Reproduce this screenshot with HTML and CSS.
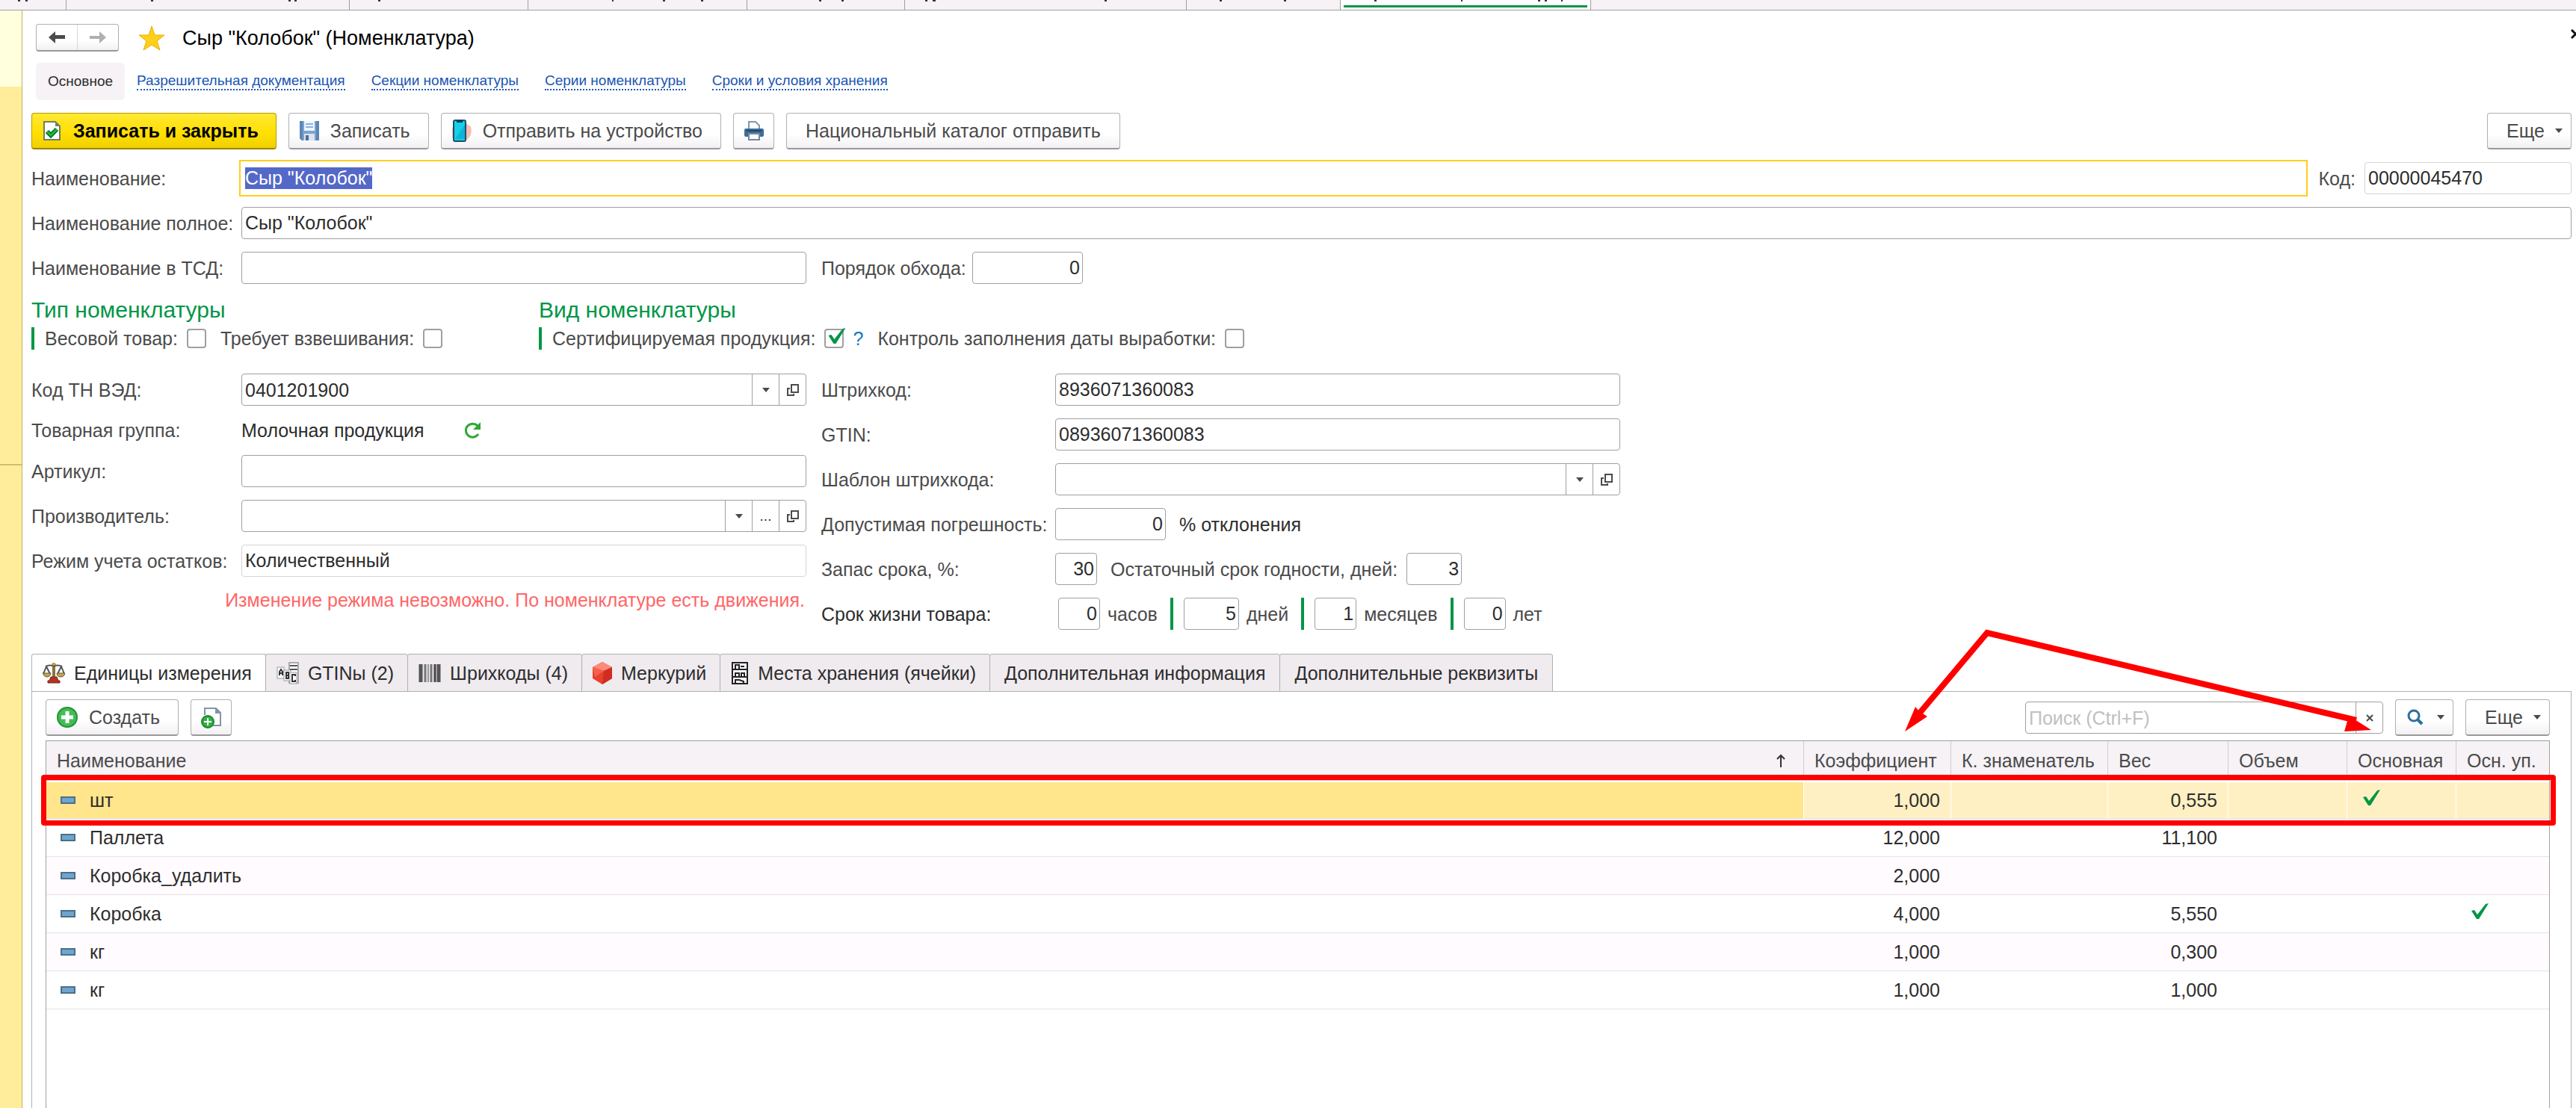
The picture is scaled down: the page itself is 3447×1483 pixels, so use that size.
FILE: index.html
```html
<!DOCTYPE html>
<html lang="ru">
<head>
    <meta charset="UTF-8">
    <meta name="viewport" content="width=device-width, initial-scale=1.0">
    <title>Сыр "Колобок" (Номенклатура)</title>
    <link rel="stylesheet" href="styles.css">
</head>
<body>

    <!-- иконки, которые используются несколько раз -->
    <svg class="sprite" aria-hidden="true">
        <symbol id="i-open" viewBox="0 0 18 18">
            <path d="M7 2h9v10H7zM5 7H2v9h8v-2" fill="none" stroke="#4b4b4b" stroke-width="2"/>
        </symbol>
        <symbol id="i-down" viewBox="0 0 10 6">
            <path d="M0 0h10L5 6z" fill="#4b4b4b"/>
        </symbol>
        <symbol id="i-check" viewBox="0 0 24 22">
            <path d="M1 10l4-1 4 6L20 1l4-1L11 21H8z" fill="#009646"/>
        </symbol>
        <symbol id="i-row" viewBox="0 0 20 10">
            <rect x="1" y="1" width="18" height="8" fill="#6fa5cf" stroke="#4a7088" stroke-width="2"/>
        </symbol>
    </svg>

    <div class="windows">
        <div class="window-tab w1"></div>
        <div class="window-tab w2"></div>
        <div class="window-tab w3"></div>
        <div class="window-tab w4"></div>
        <div class="window-tab w5"></div>
        <div class="window-tab w6"></div>
        <div class="window-tab w7"></div>
        <div class="window-tab w8 current"></div>
        <svg class="tails" width="2130" height="2" aria-hidden="true">
            <path d="M24 1h3M34 1h3M202 1h3M386 1h3M394 1h3M506 1h3M819 1h2M887 1h3M938 1h3M1096 1h3M1126 1h3M1238 1h3M1248 1h4M1478 1h3M1632 1h3M1718 1h3M1839 1h3M1955 1h2M2058 1h3M2067 1h3M2089 1h2" stroke="#333" stroke-width="2"/>
        </svg>
    </div>

    <div class="app">
        <aside class="sidebar">
            <div class="side-top"></div>
            <div class="side-mid"></div>
        </aside>

        <main class="form">
            <header class="title-bar">
                <div class="history">
                    <button type="button" aria-label="Назад">
                        <svg width="22" height="16" viewBox="0 0 22 16"><path d="M0 8l9-8v5h13v5H9v6z" fill="#4b4b4b"/></svg>
                    </button>
                    <button type="button" aria-label="Вперед">
                        <svg width="22" height="16" viewBox="0 0 22 16"><path d="M22 8l-9-8v6H0v4h13v6z" fill="#b0b0b0"/></svg>
                    </button>
                </div>
                <svg class="star" width="36" height="34" viewBox="0 0 36 34"><path d="M18 1l4 12h13l-10 8 4 12-11-7-11 7 4-12-10-8h13z" fill="#ffcf1a" stroke="#e5b000"/></svg>
                <h1>Сыр "Колобок" (Номенклатура)</h1>
                <button type="button" class="close" aria-label="Закрыть">
                    <svg width="13" height="13" viewBox="0 0 13 13"><path d="M1 1l11 11M12 1L1 12" stroke="#111" stroke-width="3"/></svg>
                </button>
            </header>

            <nav class="sections">
                <span class="section-current">Основное</span>
                <a href="#">Разрешительная документация</a>
                <a href="#">Секции номенклатуры</a>
                <a href="#">Серии номенклатуры</a>
                <a href="#">Сроки и условия хранения</a>
            </nav>

            <div class="toolbar">
                <button type="button" class="btn btn-main">
                    <svg width="26" height="28" viewBox="0 0 26 28"><path d="M2 2h15l6 6v18H2z" fill="#fff" stroke="#6f7f60" stroke-width="2"/><path d="M17 2v6h6z" fill="#6f8076"/><path d="M6 15l5 5 8-8" fill="none" stroke="#064" stroke-width="6"/><path d="M6 15l5 5 8-8" fill="none" stroke="#1cbf1c" stroke-width="3"/></svg>
                    Записать и закрыть
                </button>
                <button type="button" class="btn btn-icon">
                    <svg width="26" height="28" viewBox="0 0 26 28"><path d="M0 1h26v26H3l-3-3z" fill="#7ba3d3"/><path d="M0 1h4v26H3l-3-3zM22 1h4v26h-4z" fill="#5f86b4"/><path d="M6 1h14v13H6z" fill="#eef5fd"/><path d="M8 5h10M8 9h10" stroke="#8fb1dc" stroke-width="2"/><path d="M6 18h14v9H6z" fill="#dde3ea"/><path d="M8 20h4v7H8z" fill="#4a6f9d"/></svg>
                    Записать
                </button>
                <button type="button" class="btn btn-icon">
                    <svg width="26" height="30" viewBox="0 0 26 30"><path d="M2 10q-4 9 1 17zM18 6l6 4q3 11-6 17z" fill="#f8bdb2" stroke="#f8bdb2" stroke-width="2"/><rect x="2" y="1" width="16" height="28" rx="2" fill="#18cfe8" stroke="#1d5068" stroke-width="2"/><path d="M6 1h8v3H6z" fill="#173b52"/><path d="M4 26L17 7v19z" fill="#0fb4d8"/></svg>
                    Отправить на устройство
                </button>
                <button type="button" class="btn btn-square" aria-label="Печать">
                    <svg width="28" height="28" viewBox="0 0 28 28"><path d="M7 12V2h9l5 5v5" fill="#fff" stroke="#8298ac" stroke-width="2"/><rect x="1" y="11" width="26" height="11" rx="2" fill="#3f6d98"/><path d="M4 14h20" stroke="#224768" stroke-width="2"/><rect x="7" y="18" width="14" height="8" fill="#fff" stroke="#7088a0" stroke-width="2"/></svg>
                </button>
                <button type="button" class="btn">Национальный каталог отправить</button>
                <button type="button" class="btn btn-more">Еще <svg width="10" height="6"><use href="#i-down"/></svg></button>
            </div>

            <div class="rows">
                <div class="row">
                    <label class="cap" for="name">Наименование:</label>
                    <input class="field grow focused" id="name" type="text" value='Сыр "Колобок"'>
                    <label class="code-cap" for="code">Код:</label>
                    <input class="field code readonly" id="code" type="text" value="00000045470" readonly>
                </div>
                <div class="row">
                    <label class="cap" for="fullName">Наименование полное:</label>
                    <input class="field grow" id="fullName" type="text" value='Сыр "Колобок"'>
                </div>
                <div class="row">
                    <label class="cap" for="tsdName">Наименование в ТСД:</label>
                    <input class="field wide" id="tsdName" type="text">
                    <label class="order-cap" for="order">Порядок обхода:</label>
                    <input class="field num w-l" id="order" type="text" value="0">
                </div>
            </div>

            <div class="kinds">
                <section class="kind">
                    <h2>Тип номенклатуры</h2>
                    <div class="checks">
                        <label for="weighted">Весовой товар:</label>
                        <input type="checkbox" id="weighted">
                        <label class="next" for="needWeigh">Требует взвешивания:</label>
                        <input type="checkbox" id="needWeigh">
                    </div>
                </section>
                <section class="kind">
                    <h2>Вид номенклатуры</h2>
                    <div class="checks">
                        <label for="certified">Сертифицируемая продукция:</label>
                        <input type="checkbox" id="certified" checked>
                        <a class="help" href="#">?</a>
                        <label class="next" for="dateControl">Контроль заполнения даты выработки:</label>
                        <input type="checkbox" id="dateControl">
                    </div>
                </section>
            </div>

            <div class="columns">
                <div class="rows">
                    <div class="row">
                        <label class="cap" for="tnved">Код ТН ВЭД:</label>
                        <div class="field combo wide">
                            <input id="tnved" type="text" value="0401201900">
                            <button type="button" aria-label="Выбрать"><svg width="10" height="6"><use href="#i-down"/></svg></button>
                            <button type="button" aria-label="Открыть"><svg width="18" height="18"><use href="#i-open"/></svg></button>
                        </div>
                    </div>
                    <div class="row row-text">
                        <span class="cap">Товарная группа:</span>
                        <span class="value">Молочная продукция</span>
                        <button type="button" class="refresh" aria-label="Обновить">
                            <svg width="24" height="24" viewBox="0 0 24 24"><path d="M20 17a9 9 0 1 1-1-11" fill="none" stroke="#2fa836" stroke-width="3"/><path d="M23 1v10H13z" fill="#2fa836"/></svg>
                        </button>
                    </div>
                    <div class="row">
                        <label class="cap" for="article">Артикул:</label>
                        <input class="field wide" id="article" type="text">
                    </div>
                    <div class="row">
                        <label class="cap" for="maker">Производитель:</label>
                        <div class="field combo wide">
                            <input id="maker" type="text">
                            <button type="button" aria-label="Выбрать"><svg width="10" height="6"><use href="#i-down"/></svg></button>
                            <button type="button" class="dots" aria-label="Подбор">...</button>
                            <button type="button" aria-label="Открыть"><svg width="18" height="18"><use href="#i-open"/></svg></button>
                        </div>
                    </div>
                    <div class="row">
                        <label class="cap" for="mode">Режим учета остатков:</label>
                        <input class="field wide readonly" id="mode" type="text" value="Количественный" readonly>
                    </div>
                    <div class="warning">Изменение режима невозможно. По номенклатуре есть движения.</div>
                </div>

                <div class="rows right">
                    <div class="row">
                        <label class="cap" for="barcode">Штрихкод:</label>
                        <input class="field wide" id="barcode" type="text" value="8936071360083">
                    </div>
                    <div class="row">
                        <label class="cap" for="gtin">GTIN:</label>
                        <input class="field wide" id="gtin" type="text" value="08936071360083">
                    </div>
                    <div class="row">
                        <label class="cap" for="template">Шаблон штрихкода:</label>
                        <div class="field combo wide">
                            <input id="template" type="text">
                            <button type="button" aria-label="Выбрать"><svg width="10" height="6"><use href="#i-down"/></svg></button>
                            <button type="button" aria-label="Открыть"><svg width="18" height="18"><use href="#i-open"/></svg></button>
                        </div>
                    </div>
                    <div class="row">
                        <label class="cap" for="error">Допустимая погрешность:</label>
                        <input class="field num w-l" id="error" type="text" value="0">
                        <span class="value after">% отклонения</span>
                    </div>
                    <div class="row">
                        <label class="cap" for="reserve">Запас срока, %:</label>
                        <input class="field num w-s" id="reserve" type="text" value="30">
                        <label class="after" for="rest">Остаточный срок годности, дней:</label>
                        <input class="field num w-m rest" id="rest" type="text" value="3">
                    </div>
                    <div class="row life">
                        <span class="cap value">Срок жизни товара:</span>
                        <div class="part">
                            <input class="field num w-s" id="hours" type="text" value="0">
                            <label for="hours">часов</label>
                        </div>
                        <div class="part">
                            <input class="field num w-m" id="days" type="text" value="5">
                            <label for="days">дней</label>
                        </div>
                        <div class="part">
                            <input class="field num w-s" id="months" type="text" value="1">
                            <label for="months">месяцев</label>
                        </div>
                        <div class="part">
                            <input class="field num w-s" id="years" type="text" value="0">
                            <label for="years">лет</label>
                        </div>
                    </div>
                </div>
            </div>

            <div class="tabs">
                <button type="button" class="tab active">
                    <svg width="30" height="28" viewBox="0 0 30 28"><path d="M13 3h4v16h-4z" fill="#8a7340"/><circle cx="15" cy="3" r="3" fill="#c79a35"/><path d="M4 5q6-3 11 0 5-3 11 0M5 5L1 15M5 5l5 10M25 5l-5 10M25 5l4 10" fill="none" stroke="#555" stroke-width="2"/><path d="M0 14h11q-1 5-5 5t-6-5zM19 14h11q-1 5-6 5t-5-5z" fill="#cfa23c" stroke="#555"/><path d="M11 19h8l2 5h2v3H7v-3h2z" fill="#b5331f" stroke="#6d2a1c"/></svg>
                    Единицы измерения
                </button>
                <button type="button" class="tab">
                    <svg width="30" height="30" viewBox="0 0 30 30"><path d="M17 1h12v27H17z" fill="#fff" stroke="#aaa" stroke-width="2"/><path d="M18 5h10M18 10h10" stroke="#555" stroke-width="2"/><rect x="1" y="7" width="9" height="15" fill="#fff" stroke="#999"/><rect x="10" y="11" width="9" height="14" fill="#fff" stroke="#999"/><rect x="18" y="14" width="9" height="15" fill="#fff" stroke="#999"/><path d="M4 18v-5l2-3 2 3v5M4 15h4M13 14v8h3v-8zM13 18h3M25 19v-2h-4v9h4v-2" fill="none" stroke="#333" stroke-width="2"/></svg>
                    GTINы (2)
                </button>
                <button type="button" class="tab">
                    <svg width="30" height="24" viewBox="0 0 30 24"><path d="M3 0v24M27 0v24" stroke="#555" stroke-width="5"/><path d="M9 0v24M17 0v24" stroke="#777" stroke-width="3"/><path d="M13 0v24" stroke="#999" stroke-width="2"/><path d="M22 0v24" stroke="#444" stroke-width="3"/></svg>
                    Шрихкоды (4)
                </button>
                <button type="button" class="tab">
                    <svg width="26" height="30" viewBox="0 0 26 30"><path d="M13 0l13 7v15l-13 8-13-8V7z" fill="#e8402f"/><path d="M13 0l13 7-11 5L0 7z" fill="#ff8a78"/><path d="M15 12l11-5v15l-13 8z" fill="#d02c20"/><path d="M0 7l15 5-12 8z" fill="#f7604d"/></svg>
                    Меркурий
                </button>
                <button type="button" class="tab">
                    <svg width="24" height="30" viewBox="0 0 24 30"><rect x="2" y="1" width="20" height="28" fill="#fff" stroke="#222" stroke-width="2"/><path d="M2 10h20M2 20h20" stroke="#222" stroke-width="2"/><path d="M6 9V4h5v5M13 6h5M6 19v-4h5v4M14 19v-4h4v4M6 28v-4h5l6 2v2" fill="none" stroke="#222" stroke-width="2"/></svg>
                    Места хранения (ячейки)
                </button>
                <button type="button" class="tab">Дополнительная информация</button>
                <button type="button" class="tab">Дополнительные реквизиты</button>
            </div>

            <div class="panel">
                <div class="toolbar">
                    <button type="button" class="btn btn-icon">
                        <svg width="28" height="28" viewBox="0 0 28 28"><circle cx="14" cy="14" r="13" fill="#44bb55" stroke="#1f9433" stroke-width="2"/><path d="M14 6v16M6 14h16" stroke="#fff" stroke-width="5"/></svg>
                        Создать
                    </button>
                    <button type="button" class="btn btn-square" aria-label="Скопировать">
                        <svg width="28" height="30" viewBox="0 0 28 30"><path d="M5 12V3h15l6 6v17H15" fill="#fff" stroke="#8593a8" stroke-width="2"/><path d="M19 2l8 8h-8z" fill="#8593a8"/><circle cx="9" cy="21" r="8" fill="#33b045" stroke="#1b8a2c" stroke-width="2"/><path d="M9 16v10M4 21h10" stroke="#fff" stroke-width="2"/></svg>
                    </button>
                    <div class="field combo search">
                        <input type="text" aria-label="Поиск" placeholder="Поиск (Ctrl+F)">
                        <button type="button" aria-label="Очистить"><svg width="10" height="10" viewBox="0 0 10 10"><path d="M1 1l8 8M9 1L1 9" stroke="#4b4b4b" stroke-width="2"/></svg></button>
                    </div>
                    <button type="button" class="btn btn-find" aria-label="Найти">
                        <svg width="22" height="22" viewBox="0 0 22 22"><circle cx="9" cy="9" r="7" fill="#fff" stroke="#2f6f9f" stroke-width="3"/><path d="M14 14l6 6" stroke="#2f6f9f" stroke-width="4"/></svg>
                        <svg width="10" height="6"><use href="#i-down"/></svg>
                    </button>
                    <button type="button" class="btn btn-more">Еще <svg width="10" height="6"><use href="#i-down"/></svg></button>
                </div>

                <div class="list">
                    <table>
                        <colgroup>
                            <col>
                            <col class="c-coef">
                            <col class="c-den">
                            <col class="c-weight">
                            <col class="c-volume">
                            <col class="c-main">
                            <col class="c-pack">
                        </colgroup>
                        <thead>
                            <tr>
                                <th><div class="sorted">Наименование <svg width="12" height="18" viewBox="0 0 12 18"><path d="M6 18V2M1 7l5-5 5 5" fill="none" stroke="#333" stroke-width="2"/></svg></div></th>
                                <th>Коэффициент</th>
                                <th>К. знаменатель</th>
                                <th>Вес</th>
                                <th>Объем</th>
                                <th>Основная</th>
                                <th>Осн. уп.</th>
                            </tr>
                        </thead>
                        <tbody>
                            <tr class="selected">
                                <td><svg class="mark" width="20" height="10"><use href="#i-row"/></svg>шт</td>
                                <td class="n">1,000</td><td></td><td class="n">0,555</td><td></td>
                                <td><svg class="check" width="24" height="22"><use href="#i-check"/></svg></td><td></td>
                            </tr>
                            <tr>
                                <td><svg class="mark" width="20" height="10"><use href="#i-row"/></svg>Паллета</td>
                                <td class="n">12,000</td><td></td><td class="n">11,100</td><td></td><td></td><td></td>
                            </tr>
                            <tr>
                                <td><svg class="mark" width="20" height="10"><use href="#i-row"/></svg>Коробка_удалить</td>
                                <td class="n">2,000</td><td></td><td></td><td></td><td></td><td></td>
                            </tr>
                            <tr>
                                <td><svg class="mark" width="20" height="10"><use href="#i-row"/></svg>Коробка</td>
                                <td class="n">4,000</td><td></td><td class="n">5,550</td><td></td><td></td>
                                <td><svg class="check" width="24" height="22"><use href="#i-check"/></svg></td>
                            </tr>
                            <tr>
                                <td><svg class="mark" width="20" height="10"><use href="#i-row"/></svg>кг</td>
                                <td class="n">1,000</td><td></td><td class="n">0,300</td><td></td><td></td><td></td>
                            </tr>
                            <tr>
                                <td><svg class="mark" width="20" height="10"><use href="#i-row"/></svg>кг</td>
                                <td class="n">1,000</td><td></td><td class="n">1,000</td><td></td><td></td><td></td>
                            </tr>
                        </tbody>
                    </table>
                    <div class="frame"></div>
                </div>

                <!-- стрелки к колонкам "Коэффициент" и "Основная" -->
                <svg class="arrows" width="640" height="140" viewBox="0 0 640 140" aria-hidden="true">
                    <path d="M28 112L118 5 612 122" fill="none" stroke="#f00" stroke-width="8"/>
                    <path d="M8 137l14-33 5 6 11 7zM632 135l-30-19-6 21z" fill="#f00"/>
                </svg>
            </div>
        </main>
    </div>

    <script>
        // при открытии формы наименование выделено целиком
        document.addEventListener('DOMContentLoaded', function() {
            const name = document.getElementById('name');
            name.focus();
            name.select();
        });
    </script>
</body>
</html>
```
FILE: styles.css
```css
* {
    box-sizing: border-box;
}
body {
    margin: 0;
    height: 100vh;
    display: flex;
    flex-direction: column;
    overflow: hidden;
    background: #fff;
    color: #4b4b4b;
    font-family: "Liberation Sans", Arial, sans-serif;
    font-size: 25px;
    line-height: 28px;
}
button, input {
    font: inherit;
    color: inherit;
}
button {
    cursor: pointer;
}
svg {
    flex: none;
}
.sprite {
    position: absolute;
    width: 0;
    height: 0;
}

/* полоса открытых окон */
.windows {
    position: relative;
    display: flex;
    flex: none;
    height: 14px;
    background: #f6f2f6;
    border-bottom: 1px solid #a0a0a0;
}
.window-tab {
    border-right: 1px solid #a0a0a0;
}
.w1 { width: 89px; }
.w2 { width: 379px; }
.w3 { width: 239px; }
.w4 { width: 293px; }
.w5 { width: 211px; }
.w6 { width: 377px; }
.w7 { width: 206px; }
.w8 { width: 335px; }
.window-tab.current {
    background: #fff;
    padding: 7px 4px 0;
}
.window-tab.current::after {
    content: "";
    display: block;
    height: 3px;
    background: #009646;
}
.tails {
    position: absolute;
    left: 0;
    top: 0;
}

.app {
    flex: 1;
    display: flex;
    min-height: 0;
}
.sidebar {
    flex: none;
    width: 30px;
    display: flex;
    flex-direction: column;
    background: #ffed9c;
    border-right: 1px solid #c2b25a;
}
.side-top {
    height: 102px;
    background: #ffffde;
}
.side-mid {
    height: 507px;
    border-bottom: 2px solid #d0bf72;
}
.form {
    flex: 1;
    min-width: 0;
    display: flex;
    flex-direction: column;
    padding: 18px 6px 0 12px;
}

/* заголовок */
.title-bar {
    display: flex;
    align-items: center;
    height: 37px;
    padding-left: 6px;
}
.history {
    display: flex;
    width: 111px;
    height: 37px;
    border: 1px solid #b0b0b0;
    border-bottom: 2px solid #999;
    border-radius: 4px;
    background: linear-gradient(#fff 60%, #f3f0f3);
}
.history button {
    flex: 1;
    display: flex;
    align-items: center;
    justify-content: center;
    padding: 0;
    border: 0;
    background: none;
}
.history button + button {
    border-left: 1px solid #d8d8d8;
}
.star {
    margin: 0 23px 0 26px;
}
h1 {
    margin: 0;
    color: #000;
    font-size: 27px;
    font-weight: normal;
    line-height: 34px;
}
.close {
    margin: 0 -12px 10px auto;
    display: flex;
    padding: 0;
    border: 0;
    background: none;
}

.sections {
    display: flex;
    align-items: center;
    gap: 35px;
    margin-top: 15px;
    padding-left: 6px;
    font-size: 19px;
    line-height: 24px;
}
.section-current {
    padding: 13px 16px;
    margin-right: -19px;
    border-radius: 6px;
    background: #f6f2f6;
    color: #2d2d2d;
}
.sections a {
    color: #1a56b4;
    text-decoration: none;
    border-bottom: 2px dotted #1a56b4;
    line-height: 22px;
}

/* кнопки */
.toolbar {
    display: flex;
    gap: 16px;
    margin-top: 17px;
}
.btn {
    display: flex;
    align-items: center;
    height: 49px;
    padding: 0 25px;
    border: 1px solid #b0b0b0;
    border-bottom: 2px solid #999;
    border-radius: 4px;
    background: linear-gradient(#fff 60%, #f3f0f3);
    white-space: nowrap;
}
.btn-icon, .btn-main {
    gap: 15px;
    padding: 0 24px 0 14px;
}
.btn-main {
    padding-right: 23px;
    border-color: #b39b00;
    border-bottom-color: #998500;
    background: linear-gradient(#ffe833, #ffdf00 60%, #efcf00);
    color: #000;
    font-weight: bold;
}
.btn-square {
    justify-content: center;
    width: 55px;
    padding: 0;
}
.btn-more {
    width: 113px;
    gap: 14px;
    padding: 0 0 0 25px;
}
.form > .toolbar .btn-more {
    margin-left: auto;
}
.btn-find {
    width: 78px;
    gap: 18px;
    padding: 0 0 0 15px;
}

/* поля */
.rows {
    display: flex;
    flex-direction: column;
    gap: 17px;
}
.form > .rows {
    margin-top: 17px;
}
.row {
    display: flex;
    align-items: center;
    height: 43px;
}
.row-text {
    height: 32px;
}
.cap {
    flex: none;
    width: 281px;
    white-space: nowrap;
}
.right .cap {
    width: 313px;
}
.value {
    color: #2d2d2d;
}
.field {
    height: 43px;
    padding: 0 4px;
    border: 1px solid #a0a0a0;
    border-radius: 4px;
    background: #fff;
    color: #2d2d2d;
}
.grow {
    flex: 1;
    min-width: 0;
}
.wide {
    width: 756px;
}
.num {
    padding-right: 3px;
    text-align: right;
}
.w-s { width: 56px; }
.w-m { width: 74px; }
.w-l { width: 148px; }
.readonly {
    border-color: #d4d4d4;
}
.focused {
    border-color: transparent;
    border-radius: 0;
}
.focused:focus {
    outline: 2px solid #ffcf1a;
    outline-offset: 1px;
}
.focused::selection {
    background: #5468c8;
    color: #fff;
}
.code-cap {
    margin: 0 12px 0 18px;
}
.code {
    width: 277px;
}
.order-cap {
    width: 202px;
    margin-left: 20px;
}
.combo {
    display: flex;
    padding: 0;
    overflow: hidden;
}
.combo input {
    flex: 1;
    min-width: 0;
    padding: 0 4px;
    border: 0;
    outline: 0;
    background: none;
}
.combo button {
    display: flex;
    align-items: center;
    justify-content: center;
    width: 36px;
    padding: 0;
    border: 0;
    border-left: 1px solid #a0a0a0;
    background: none;
}
.combo .dots {
    font-size: 19px;
}
.refresh {
    display: flex;
    margin-left: 52px;
    padding: 0;
    border: 0;
    background: none;
}
.warning {
    padding-right: 2px;
    color: #f66;
    text-align: right;
}

/* тип и вид номенклатуры */
.kinds {
    display: flex;
    margin-top: 18px;
}
.kind:first-child {
    width: 679px;
}
h2 {
    margin: 0 0 6px;
    color: #009646;
    font-size: 30px;
    font-weight: normal;
    line-height: 34px;
}
.checks {
    display: flex;
    align-items: center;
    height: 30px;
    padding-left: 14px;
    border-left: 4px solid #009646;
}
.checks .next {
    margin-left: 19px;
}
.checks input {
    appearance: none;
    position: relative;
    width: 26px;
    height: 26px;
    margin: 0 0 0 12px;
    border: 2px solid #a0a0a0;
    border-radius: 4px;
    background: #fff;
}
.checks input:checked::after {
    content: "";
    position: absolute;
    left: 2px;
    top: -3px;
    width: 24px;
    height: 22px;
    background: #009646;
    clip-path: polygon(1px 10px, 5px 9px, 9px 15px, 20px 1px, 24px 0, 11px 21px, 8px 21px);
}
.help {
    margin-left: 12px;
    color: #1074c8;
    text-decoration: none;
}

.columns {
    display: flex;
    gap: 20px;
    margin-top: 32px;
}
.after {
    margin-left: 18px;
}
.rest {
    margin-left: 12px;
}
.life .part {
    display: flex;
    align-items: center;
    gap: 10px;
}
.life .part:nth-child(2) {
    margin-left: 4px;
}
.life .part + .part {
    margin-left: 17px;
    padding-left: 14px;
    border-left: 4px solid #009646;
}

/* закладки */
.tabs {
    position: relative;
    display: flex;
    margin: 32px 0 -1px;
}
.tab {
    display: flex;
    align-items: center;
    gap: 12px;
    height: 51px;
    margin-right: -1px;
    padding: 0 19px;
    border: 1px solid #b0b0b0;
    border-radius: 3px 3px 0 0;
    background: #efebef;
    color: #2d2d2d;
    white-space: nowrap;
}
.tab:has(svg) {
    padding: 0 18px 0 14px;
}
.tab.active {
    background: #fff;
    border-bottom-color: #fff;
}
.panel {
    position: relative;
    flex: 1;
    display: flex;
    flex-direction: column;
    padding: 10px 28px 0 18px;
    border: 1px solid #b0b0b0;
    border-bottom: 0;
}
.panel .toolbar {
    margin: 0;
}
.search {
    width: 479px;
    margin: 3px 0 0 auto;
}
.search input::placeholder {
    color: #c0c0c0;
}

/* список единиц */
.list {
    position: relative;
    flex: 1;
    margin-top: 6px;
    border: 1px solid #a0a0a0;
    border-bottom: 0;
}
table {
    width: 100%;
    table-layout: fixed;
    border-collapse: separate;
    border-spacing: 0;
    color: #2d2d2d;
}
.c-coef { width: 197px; }
.c-den { width: 210px; }
.c-weight { width: 161px; }
.c-volume { width: 159px; }
.c-main { width: 146px; }
.c-pack { width: 125px; }
th, td {
    height: 51px;
    padding: 0 14px;
    border-bottom: 1px solid #e6e2e6;
    text-align: left;
    font-weight: normal;
    white-space: nowrap;
}
th {
    height: 53px;
    background: #f6f2f6;
    border-bottom-color: #c8c8c8;
    color: #4b4b4b;
}
th + th {
    border-left: 1px solid #d0ccd0;
}
.sorted {
    display: flex;
    align-items: center;
    justify-content: space-between;
    padding-right: 10px;
}
tbody tr:nth-child(3), tbody tr:nth-child(5) {
    background: #fffbff;
}
td:first-child {
    padding-left: 19px;
}
.n {
    text-align: right;
}
.mark {
    margin-right: 19px;
    vertical-align: 4px;
}
.check {
    display: block;
    margin: -6px 0 0 6px;
}
.selected td {
    background: #fff0c4;
    background-clip: padding-box;
    border-top: 2px solid #fff;
}
.selected td + td {
    border-left: 1px solid #fff;
}
.selected td:first-child {
    background: #ffe58c;
}
.frame {
    position: absolute;
    left: -7px;
    right: -9px;
    top: 45px;
    height: 68px;
    border: 7px solid #f00;
    border-radius: 4px;
}
.arrows {
    position: absolute;
    right: 259px;
    top: -84px;
    pointer-events: none;
}
```
